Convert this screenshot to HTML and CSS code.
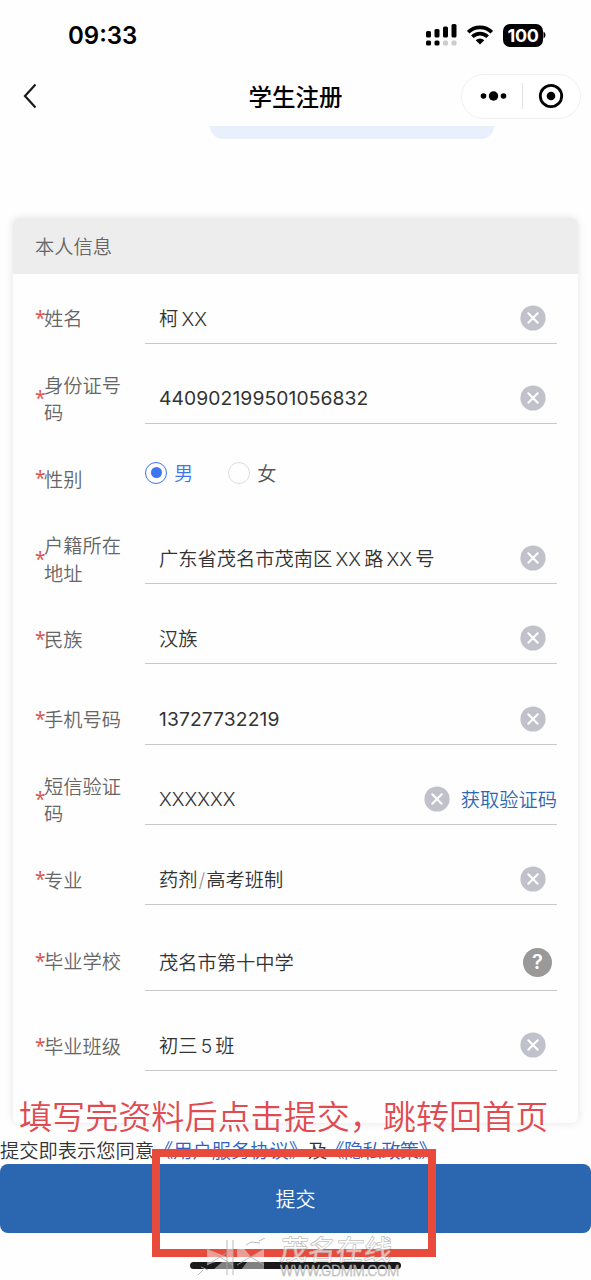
FILE: index.html
```
<!DOCTYPE html>
<html lang="zh-CN">

<head>
    <meta charset="UTF-8">
    <meta name="viewport" content="width=device-width, initial-scale=1.0">
    <title>学生注册</title>
    <link rel="stylesheet" href="styles.css">
</head>

<body>
    <svg class="symbols" aria-hidden="true">
        <symbol id="clear" viewBox="0 0 26 26">
            <circle cx="13" cy="13" r="12.6" fill="#c0c1ca" />
            <path d="M8.3 8.3l9.4 9.4M17.7 8.3l-9.4 9.4" stroke="#fff" stroke-width="2.1" stroke-linecap="round" />
        </symbol>
    </svg>

    <div class="status-bar">
        <span class="time">09:33</span>
        <div class="status-icons">
            <svg width="31" height="22" viewBox="0 0 31 22">
                <rect x="0" y="7" width="5" height="6.5" rx="1.5" />
                <rect x="8.5" y="5" width="5" height="8.5" rx="1.5" />
                <rect x="17" y="2.5" width="5" height="11" rx="1.5" />
                <rect x="25.5" y="0" width="5" height="13.5" rx="1.5" />
                <rect x="0" y="16.5" width="5" height="5" rx="1.5" />
                <rect x="8.5" y="16.5" width="5" height="5" rx="1.5" />
                <rect x="17" y="16.5" width="5" height="5" rx="1.5" fill="#ccc" />
                <rect x="25.5" y="16.5" width="5" height="5" rx="1.5" fill="#ccc" />
            </svg>
            <svg class="wifi" width="26" height="20" viewBox="0 0 26 20" fill="none" stroke="#000" stroke-width="3.7">
                <path d="M1.2 7.2a16.8 16.8 0 0 1 23.6 0" />
                <path d="M5.4 11.7a10.8 10.8 0 0 1 15.2 0" />
                <path d="M8.7 15.2a6.2 6.2 0 0 1 8.6 0L13 19.6z" fill="#000" stroke="none" />
            </svg>
            <span class="battery">100</span>
            <svg width="3" height="8" viewBox="0 0 3 8"><path d="M0.5 0.5q2 1 2 3.5t-2 3.5z" /></svg>
        </div>
    </div>

    <div class="nav-bar">
        <svg class="back" width="14" height="26" viewBox="0 0 14 26" fill="none" stroke="#1a1a1a" stroke-width="2.2">
            <path d="M12.5 1.5L2 13l10.5 11.5" />
        </svg>
        <h1>学生注册</h1>
        <div class="capsule">
            <svg width="27" height="12" viewBox="0 0 27 12">
                <circle cx="3.5" cy="6" r="2.8" />
                <circle cx="13.5" cy="6" r="4.7" />
                <circle cx="23.5" cy="6" r="2.8" />
            </svg>
            <span class="divider"></span>
            <svg width="26" height="26" viewBox="0 0 26 26">
                <circle cx="13" cy="13" r="10.7" fill="none" stroke="#000" stroke-width="2.8" />
                <circle cx="13" cy="13" r="4.3" />
            </svg>
        </div>
    </div>

    <div class="banner"></div>

    <div class="card">
        <div class="card-title">本人信息</div>
        <div class="form">
            <div class="row">
                <span class="star">*</span><label>姓名</label>
                <div class="field"><span class="value mixed">柯 XX</span><svg class="clear"><use href="#clear" /></svg></div>
            </div>
            <div class="row">
                <span class="star">*</span><label>身份证号码</label>
                <div class="field"><span class="value digits">440902199501056832</span><svg class="clear"><use href="#clear" /></svg></div>
            </div>
            <div class="row">
                <span class="star">*</span><label>性别</label>
                <div class="radios">
                    <span class="radio checked"><i></i>男</span>
                    <span class="radio"><i></i>女</span>
                </div>
            </div>
            <div class="row">
                <span class="star">*</span><label>户籍所在地址</label>
                <div class="field"><span class="value mixed">广东省茂名市茂南区 XX 路 XX 号</span><svg class="clear"><use href="#clear" /></svg></div>
            </div>
            <div class="row">
                <span class="star">*</span><label>民族</label>
                <div class="field"><span class="value">汉族</span><svg class="clear"><use href="#clear" /></svg></div>
            </div>
            <div class="row">
                <span class="star">*</span><label>手机号码</label>
                <div class="field"><span class="value digits">13727732219</span><svg class="clear"><use href="#clear" /></svg></div>
            </div>
            <div class="row">
                <span class="star">*</span><label>短信验证码</label>
                <div class="field"><span class="value">XXXXXX</span><svg class="clear"><use href="#clear" /></svg><a class="get-code">获取验证码</a></div>
            </div>
            <div class="row">
                <span class="star">*</span><label>专业</label>
                <div class="field"><span class="value">药剂<span class="slash">/</span>高考班制</span><svg class="clear"><use href="#clear" /></svg></div>
            </div>
            <div class="row school">
                <span class="star">*</span><label>毕业学校</label>
                <div class="field"><span class="value">茂名市第十中学</span><span class="help">?</span></div>
            </div>
            <div class="row">
                <span class="star">*</span><label>毕业班级</label>
                <div class="field"><span class="value mixed">初三 5 班</span><svg class="clear"><use href="#clear" /></svg></div>
            </div>
        </div>
    </div>

    <p class="agreement">提交即表示您同意<a>《用户服务协议》</a>及<a>《隐私政策》</a></p>
    <button class="submit">提交</button>
    <div class="home-bar"></div>

    <!-- Notes over the page -->
    <div class="note">填写完资料后点击提交，跳转回首页</div>
    <div class="highlight"></div>
    <div class="watermark">
        <svg width="76" height="38" viewBox="0 0 76 38" fill="rgba(255,255,255,0.45)" stroke="none">
            <path d="M9 11l20 8V2h6v35H9l20-17L9 27z" />
            <path d="M39 2l14 17L66 11v26H39l14-18-14 4z" />
            <path d="M29 2v35M35 2v35M9 11l26 16M9 27l26-16M39 11l27 16M39 27l27-16M48 7l5-3 9 1M61 3l6-3M0 37l5-5M3 29l7 3" fill="none" stroke="#aaa" stroke-width="0.8" />
        </svg>
        <div class="watermark-text">
            <span class="site-name">茂名在线</span>
            <span class="site-url">WWW.GDMM.COM</span>
        </div>
    </div>
</body>

</html>
```
FILE: styles.css
```
* {
    box-sizing: border-box;
}

body {
    position: relative;
    height: 1280px;
    margin: 0;
    overflow: hidden;
    background: #fefefe;
    color: #333;
    font-family: Inter, "Noto Sans CJK SC", sans-serif;
    font-size: 19.25px;
    font-weight: 350;
}

.symbols {
    display: none;
}

.status-bar {
    display: flex;
    justify-content: space-between;
    align-items: center;
    height: 70px;
    padding: 0 45px 0 68px;
    color: #000;
}

.time {
    font-size: 24px;
    font-weight: 600;
}

.status-icons {
    display: flex;
    align-items: center;
}

.wifi {
    margin: 0 10px 0 10px;
}

.battery {
    width: 40px;
    height: 23px;
    border-radius: 7px;
    background: #000;
    color: #fff;
    font-size: 18px;
    font-weight: 700;
    line-height: 23px;
    text-align: center;
    letter-spacing: -0.3px;
}

.nav-bar {
    display: grid;
    grid-template-columns: 120px 1fr 120px;
    align-items: center;
    height: 56px;
    padding: 0 10px 4px;
}

.back {
    margin-left: 13px;
}

.nav-bar h1 {
    margin: 0;
    padding-top: 3px;
    color: #000;
    font-size: 23.5px;
    font-weight: 500;
    line-height: 34px;
    text-align: center;
}

.capsule {
    display: flex;
    justify-content: space-between;
    align-items: center;
    height: 45px;
    padding: 0 16px 0 18px;
    border: 1px solid #f0f0f0;
    border-radius: 23px;
    background: #fff;
}

.divider {
    width: 1px;
    height: 26px;
    background: #e3e3e3;
}

.banner {
    width: 284px;
    height: 13px;
    margin-left: 210px;
    border-radius: 0 0 15px 15px;
    background: #e7f0fb;
}

.card {
    width: 565px;
    height: 905px;
    margin: 79px 0 0 13px;
    border-radius: 6px;
    background: #fefefe;
    box-shadow: 0 0 8px rgba(0, 0, 0, 0.11);
    overflow: hidden;
}

.card-title {
    height: 56px;
    padding: 1px 0 0 22px;
    background: #ededed;
    color: #666;
    line-height: 56px;
}

.form {
    padding: 4px 21px 0 22px;
}

.row {
    display: flex;
    align-items: center;
    height: 80.2px;
}

.star {
    width: 9px;
    color: #d9534f;
    font-family: "Noto Sans", sans-serif;
    font-size: 19px;
    font-weight: 400;
}

.row label {
    width: 78px;
    margin-right: 23px;
    padding-top: 4px;
    color: #666;
    line-height: 27.5px;
}

.field {
    display: flex;
    align-items: center;
    flex: 1;
    height: 51px;
    padding-left: 14px;
    border-bottom: 1.5px solid #c8c8c8;
}

.value {
    flex: 1;
    white-space: nowrap;
}

.digits {
    font-weight: 400;
    letter-spacing: 0.1px;
}

.mixed {
    word-spacing: -2.2px;
}

.clear {
    width: 26px;
    height: 26px;
    margin-right: 11px;
}

.get-code {
    color: #2d68b2;
}

.slash {
    margin: 0 1px;
    color: #999;
}

.help {
    width: 29px;
    height: 29px;
    margin-right: 5px;
    border-radius: 50%;
    background: #999;
    color: #fff;
    font-size: 20px;
    font-weight: 600;
    line-height: 29px;
    text-align: center;
}

.row.school {
    height: 86px;
}

.school label,
.school .star {
    margin-bottom: 4px;
}

.school .field {
    height: 57px;
}

.radios {
    display: flex;
    gap: 35px;
    margin-bottom: 11px;
}

.radio {
    display: flex;
    align-items: center;
    gap: 7px;
    color: #555;
}

.radio i {
    display: flex;
    width: 22px;
    height: 22px;
    padding: 4.5px;
    border: 1px solid #ddd;
    border-radius: 50%;
}

.radio.checked {
    color: #3c76f2;
}

.radio.checked i {
    border: 1.5px solid #3c76f2;
}

.radio.checked i::before {
    content: "";
    flex: 1;
    border-radius: 50%;
    background: #3c76f2;
}

.agreement {
    margin: 15px 0 0;
    line-height: 26px;
    white-space: nowrap;
}

.agreement a {
    color: #2c62c4;
}

.agreement a:last-child {
    margin-left: -2px;
    letter-spacing: -0.6px;
}

.submit {
    display: block;
    width: 100%;
    height: 69px;
    border: none;
    border-radius: 8px;
    background: #2b67b1;
    color: #fff;
    font-family: inherit;
    font-size: 20px;
    font-weight: 350;
}

.home-bar {
    width: 211px;
    height: 7px;
    margin: 29px 0 0 190px;
    border-radius: 4px;
    background: #1a1a1a;
}

.note {
    position: absolute;
    top: 1093px;
    left: 19px;
    color: #e04a50;
    font-size: 33.1px;
    line-height: 48px;
    white-space: nowrap;
}

.highlight {
    position: absolute;
    top: 1149px;
    left: 152px;
    width: 284px;
    height: 108px;
    border: 8px solid #e84b3c;
}

.watermark {
    position: absolute;
    top: 1238px;
    left: 198px;
    display: flex;
    gap: 6px;
}

.watermark-text {
    display: flex;
    flex-direction: column;
    gap: 2px;
    color: rgba(255, 255, 255, 0.6);
    -webkit-text-stroke: 0.5px #aaa;
    white-space: nowrap;
}

.site-name {
    font-size: 28px;
    font-weight: 500;
    line-height: 25px;
    transform: skewX(-6deg);
}

.site-url {
    font-size: 13.8px;
    line-height: 13px;
    letter-spacing: -0.4px;
}
```
